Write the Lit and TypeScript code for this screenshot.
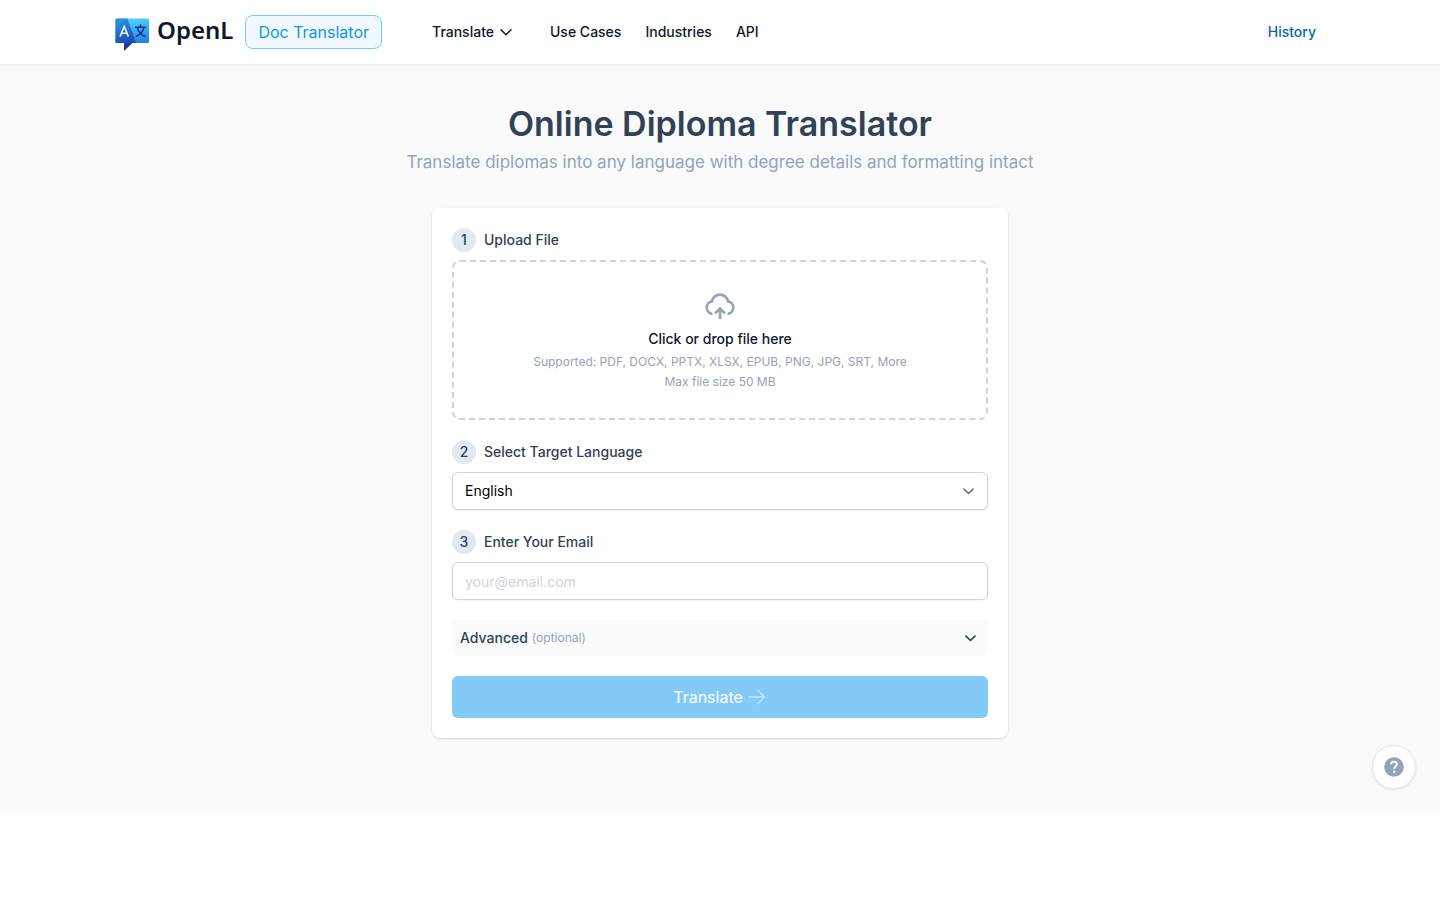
import { LitElement, html, css } from "lit";
import { customElement, state } from "lit/decorators.js";

const chevron = html`<svg class="chevron" viewBox="0 0 16 16" aria-hidden="true">
  <path d="M4 6.200 8.500 10.500 13 6.200" fill="none" stroke="currentColor" stroke-width="1.700" stroke-linecap="round" stroke-linejoin="round" />
</svg>`;

@customElement("app-header")
export class AppHeader extends LitElement {
  static styles = css`
    :host {
      display: block;
      background: #fff;
      box-shadow: 0 1px 2px rgba(15, 23, 42, 0.06);
      position: relative;
    }
    .bar {
      box-sizing: border-box;
      max-width: 1280px;
      min-height: 64px;
      margin: 0 auto;
      padding: 0 32px;
      display: flex;
      align-items: center;
    }
    a {
      text-decoration: none;
      color: #0f172a;
    }
    .brand {
      display: flex;
      align-items: center;
      gap: 6px;
    }
    .mark {
      width: 39px;
      height: 38px;
      display: block;
    }
    .word {
      font: 600 24px/32px "Noto Sans", "Open Sans", sans-serif;
      padding-bottom: 4px;
    }
    .pill {
      margin-left: 12px;
      padding: 4px 12px;
      border: 1px solid #7cc8f5;
      border-radius: 8px;
      background: #f0f9ff;
      color: #1296db;
      font-size: 16px;
      line-height: 24px;
    }
    nav {
      margin-left: 38px;
      display: flex;
      align-items: center;
      flex: 1;
      font-weight: 500;
      font-size: 14px;
      line-height: 20px;
    }
    .link {
      padding: 8px 12px;
    }
    .menu {
      display: flex;
      align-items: center;
      gap: 4px;
      padding: 8px 12px;
      margin-right: 12px;
      border: 0;
      background: none;
      font: inherit;
      color: #0f172a;
    }
    .chevron {
      width: 16px;
      height: 16px;
    }
    .history {
      margin-left: auto;
      color: #0369a1;
    }
  `;

  render() {
    return html`<header class="bar">
      <a class="brand" href="#" aria-label="OpenL">
        <svg class="mark" viewBox="0 0 39 38" aria-hidden="true">
          <defs>
            <linearGradient id="left" x1="0" y1="0" x2="0.3" y2="1">
              <stop offset="0" stop-color="#2b9be8" />
              <stop offset="1" stop-color="#1b4fb8" />
            </linearGradient>
            <linearGradient id="right" x1="0.3" y1="0" x2="0.5" y2="1">
              <stop offset="0" stop-color="#54d4fb" />
              <stop offset="1" stop-color="#2584e8" />
            </linearGradient>
            <linearGradient id="tail" x1="0" y1="0" x2="0" y2="1">
              <stop offset="0" stop-color="#1f45b0" />
              <stop offset="1" stop-color="#1b1f8f" />
            </linearGradient>
          </defs>
          <path d="M4.500 5.500h31.300a1.200 1.200 0 0 1 1.200 1.200v22a1.200 1.200 0 0 1-1.200 1.200H22z" fill="url(#right)" />
          <path d="M4.500 5.500h11L24 29.900H4.500a1.200 1.200 0 0 1-1.200-1.200v-22A1.200 1.200 0 0 1 4.500 5.500z" fill="url(#left)" />
          <path d="M12 29.500h9L12 38z" fill="url(#tail)" />
          <path d="M8 23.500 12.200 13.500 16.400 23.500M9.500 20.300h5.400" fill="none" stroke="#f2fbff" stroke-width="1.600" />
          <path d="M23 14.300h11M28.500 11.400v2.900M31.800 14.600C31 18.200 28 21.800 23.700 23.500M25.300 14.600c.9 3.600 3.800 7.200 8.100 8.900" fill="none" stroke="#17328c" stroke-width="1.600" />
        </svg>
        <span class="word">OpenL</span>
      </a>
      <a class="pill" href="#">Doc Translator</a>
      <nav>
        <button class="menu" type="button">Translate
          <svg class="chevron" viewBox="0 0 16 16" aria-hidden="true">
            <path d="M3 5.800 8 10.800 13 5.800" fill="none" stroke="currentColor" stroke-width="1.500" stroke-linecap="round" stroke-linejoin="round" />
          </svg>
        </button>
        <a class="link" href="#">Use Cases</a>
        <a class="link" href="#">Industries</a>
        <a class="link" href="#">API</a>
        <a class="link history" href="#">History</a>
      </nav>
    </header>`;
  }
}

@customElement("translate-form")
export class TranslateForm extends LitElement {
  @state() private email = "";

  static styles = css`
    :host {
      display: block;
      width: 100%;
      max-width: 576px;
      margin: 32px auto 0;
    }
    .card {
      display: flex;
      flex-direction: column;
      gap: 20px;
      padding: 20px;
      background: #fff;
      border-radius: 8px;
      box-shadow: 0 1px 3px rgba(0, 0, 0, 0.1), 0 1px 2px rgba(0, 0, 0, 0.06);
    }
    .step {
      display: flex;
      flex-direction: column;
      gap: 8px;
    }
    .label {
      display: flex;
      align-items: center;
      gap: 8px;
      font-weight: 500;
      font-size: 14px;
      line-height: 24px;
      color: #334155;
    }
    .num {
      width: 24px;
      height: 24px;
      border-radius: 50%;
      background: #e2e8f0;
      text-align: center;
    }
    .drop {
      display: flex;
      flex-direction: column;
      align-items: center;
      padding: 26px;
      border: 2px dashed #cbd5e1;
      border-radius: 8px;
      background: none;
      font: inherit;
      font-size: 12px;
      line-height: 20px;
      color: #94a3b8;
    }
    .cloud {
      width: 36px;
      height: 36px;
    }
    .prompt {
      margin: 5px 0 3px;
      font-size: 14px;
      font-weight: 500;
      color: #0f172a;
    }
    .field {
      box-sizing: border-box;
      width: 100%;
      padding: 8px 12px;
      border: 1px solid #cbd5e1;
      border-radius: 6px;
      background: #fff;
      box-shadow: 0 1px 2px rgba(0, 0, 0, 0.05);
      font: inherit;
      font-size: 14px;
      line-height: 20px;
      color: #000;
      appearance: none;
      height: 38px;
    }
    .field::placeholder {
      color: #cbd5e1;
      opacity: 1;
    }
    .select {
      display: grid;
      align-items: center;
    }
    .select > * {
      grid-area: 1 / 1;
    }
    .select .chevron {
      justify-self: end;
      margin-right: 12px;
      color: #6b7280;
      pointer-events: none;
    }
    .chevron {
      width: 16px;
      height: 16px;
    }
    .advanced {
      display: flex;
      align-items: center;
      gap: 4px;
      padding: 8px 10px 8px 8px;
      border: 0;
      border-radius: 6px;
      background: #f8fafc;
      font: inherit;
      font-weight: 500;
      font-size: 14px;
      line-height: 20px;
      color: #334155;
    }
    .advanced .chevron {
      margin-left: auto;
    }
    .optional {
      font-size: 12px;
      font-weight: 400;
      color: #94a3b8;
    }
    .submit {
      display: flex;
      align-items: center;
      justify-content: center;
      gap: 4px;
      padding: 9px 16px;
      border: 0;
      border-radius: 6px;
      background: #84caf6;
      font: inherit;
      font-size: 16px;
      line-height: 24px;
      color: #fff;
    }
    .arrow {
      width: 20px;
      height: 20px;
      opacity: 0.5;
    }
  `;

  render() {
    return html`<form class="card">
      <div class="step">
        <div class="label"><span class="num">1</span><span>Upload File</span></div>
        <button class="drop" type="button">
          <svg class="cloud" viewBox="0 0 36 36" fill="none" stroke="currentColor" aria-hidden="true">
            <path d="M10.400 25.800A6.250 6.250 0 0 1 10 13.400A8.100 8.100 0 0 1 26 13.400A6.250 6.250 0 0 1 25.600 25.800" stroke-width="2.700" />
            <path d="M18 31V20.800M13 25.400 18 20.600 23 25.400" stroke-width="2.700" />
          </svg>
          <span class="prompt">Click or drop file here</span>
          <span>Supported: PDF, DOCX, PPTX, XLSX, EPUB, PNG, JPG, SRT, More</span>
          <span>Max file size 50 MB</span>
        </button>
      </div>
      <div class="step">
        <label class="label" for="language"><span class="num">2</span>Select Target Language</label>
        <div class="select">
          <select class="field" id="language">
            <option>English</option>
          </select>
          ${chevron}
        </div>
      </div>
      <div class="step">
        <label class="label" for="email"><span class="num">3</span>Enter Your Email</label>
        <input
          class="field"
          id="email"
          type="email"
          placeholder="your@email.com"
          .value=${this.email}
          @input=${(e: Event) => (this.email = (e.target as HTMLInputElement).value)}
        />
      </div>
      <button class="advanced" type="button">
        Advanced <span class="optional">(optional)</span>${chevron}
      </button>
      <button class="submit" type="submit" disabled>
        Translate
        <svg class="arrow" viewBox="0 0 20 20" fill="none" stroke="currentColor" stroke-width="1.300" aria-hidden="true">
          <path d="M1.500 10h16M10.500 3l7 7-7 7" />
        </svg>
      </button>
    </form>`;
  }
}

@customElement("app-root")
export class AppRoot extends LitElement {
  static styles = css`
    :host {
      display: block;
      background: #fff;
      font-family: Inter, "Liberation Sans", sans-serif;
    }
    main {
      background: #f8fafc;
      padding: 40px 16px 75px;
      text-align: center;
    }
    h1 {
      margin: 0;
      font-size: 34px;
      line-height: 40px;
      font-weight: 600;
      color: #334155;
    }
    .sub {
      margin: 4px 0 0;
      font-size: 17px;
      line-height: 28px;
      color: #94a3b8;
    }
    translate-form {
      text-align: left;
    }
    .help {
      position: fixed;
      right: 24px;
      bottom: 111px;
      width: 44px;
      height: 44px;
      padding: 0;
      display: grid;
      place-items: center;
      border: 1px solid #e2e8f0;
      border-radius: 50%;
      background: #fff;
      box-shadow: 0 1px 3px rgba(0, 0, 0, 0.1);
      color: #94a3b8;
    }
    .help svg {
      width: 24px;
      height: 24px;
    }
  `;

  render() {
    return html`<app-header></app-header>
      <main>
        <h1>Online Diploma Translator</h1>
        <p class="sub">Translate diplomas into any language with degree details and formatting intact</p>
        <translate-form></translate-form>
      </main>
      <button class="help" type="button" aria-label="Help">
        <svg viewBox="0 0 24 24" aria-hidden="true">
          <circle cx="12" cy="12" r="9.800" fill="currentColor" />
          <path d="M9.100 9.500C9.100 7.700 10.300 6.700 12 6.700s2.900 1 2.900 2.600c0 1.900-2.700 2.200-2.700 4.600" fill="none" stroke="#fff" stroke-width="1.800" />
          <circle cx="12.200" cy="16.700" r="1.200" fill="#fff" />
        </svg>
      </button>`;
  }
}
